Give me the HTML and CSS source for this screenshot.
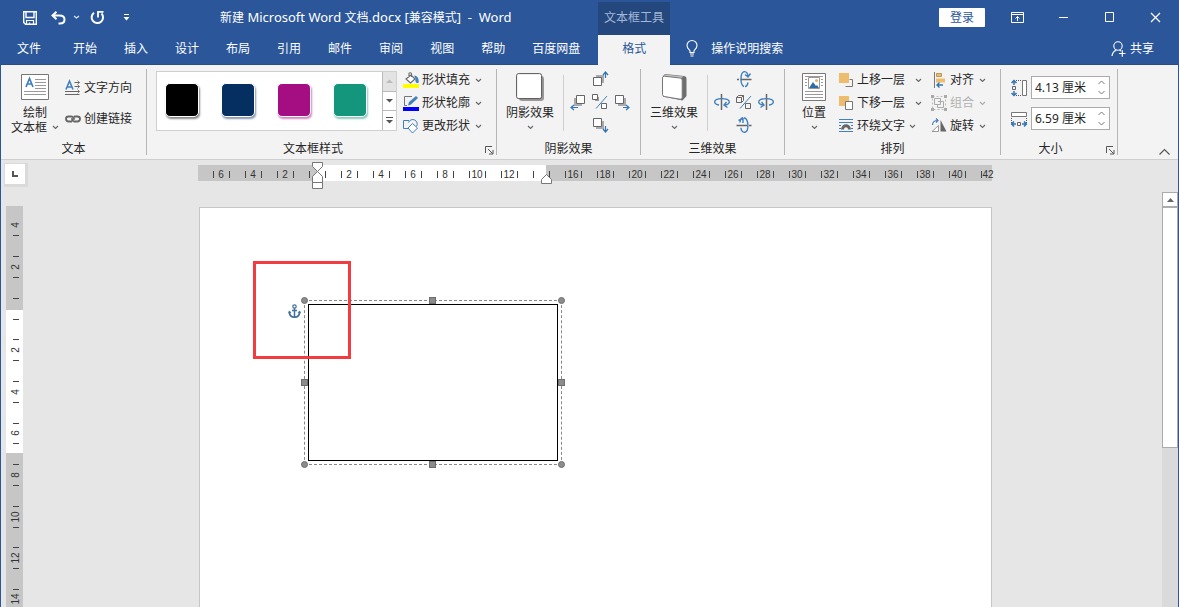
FILE: index.html
```html
<!DOCTYPE html>
<html lang="zh-CN">
<head>
<meta charset="utf-8">
<title>新建 Microsoft Word 文档.docx - Word</title>
<link rel="stylesheet" href="styles.css">
</head>
<body>
<svg class="defs" width="0" height="0" aria-hidden="true">
  <symbol id="chev" viewBox="0 0 7 5"><path d="M1 1l2.500 2.500L6 1" fill="none" stroke="#666" stroke-width="1.100"/></symbol>
  <symbol id="launcher" viewBox="0 0 9 9"><path d="M.5 7V.5H7M3 3l4.500 4.500M8 4v4H4" fill="none" stroke="#555"/></symbol>
</svg>
<div class="window">
  <header class="header">
    <div class="title-row">
      <div class="title-left">
        <div class="quick">
          <button class="qbtn save" aria-label="保存"><svg width="14" height="14" viewBox="0 0 14 14"><path d="M.7.7h12.600v12.600H2.500L.7 11.500zM3 1v5.500h8V1" fill="none" stroke="#fff" stroke-width="1.400"/><path d="M3.500 13.500v-4h7v4M6.500 13.500v-2" fill="none" stroke="#fff" stroke-width="1.200"/></svg></button>
          <button class="qbtn undo" aria-label="撤销"><svg width="15" height="14" viewBox="0 0 15 14"><path d="M5.500.8L1.500 4.500l4 3.700M2 4.500h6.500c3 0 5 1.500 5 4s-2 4-4.500 4H7.500" fill="none" stroke="#fff" stroke-width="2"/></svg></button>
          <button class="qbtn more" aria-label="撤销列表"><svg width="7" height="5" viewBox="0 0 7 5"><path d="M1 1l2.500 2L6 1" fill="none" stroke="#dbe5f5" stroke-width="1.200"/></svg></button>
          <button class="qbtn redo" aria-label="重复"><svg width="15" height="15" viewBox="0 0 15 15"><path d="M4 2.800A5.700 5.700 0 1 0 11.500 3.500" fill="none" stroke="#fff" stroke-width="2"/><path d="M8 7.500V1.800h5.500" fill="none" stroke="#fff" stroke-width="1.800"/></svg></button>
          <button class="qbtn custom" aria-label="自定义快速访问工具栏"><svg width="7" height="7" viewBox="0 0 7 7"><path d="M1 .5h5" stroke="#fff"/><path d="M.5 3h6l-3 3.500z" fill="#fff"/></svg></button>
        </div>
        <h1 class="doc-title">新建<span class="latin"> Microsoft Word </span>文档<span class="latin">.docx [</span>兼容模式<span class="latin">]&nbsp; -&nbsp; Word</span></h1>
      </div>
      <div class="context">文本框工具</div>
      <div class="win-tools">
        <button class="login">登录</button>
        <button class="wbtn" aria-label="功能区显示选项"><svg width="13" height="11" viewBox="0 0 13 11"><path d="M.5.500h12v10H.5zM.5 2.500h12M6.500 9V4.500M4.500 6.500l2-2 2 2" fill="none" stroke="#fff"/></svg></button>
        <button class="wbtn" aria-label="最小化"><svg width="11" height="11" viewBox="0 0 11 11"><path d="M1 5.500h9" stroke="#fff"/></svg></button>
        <button class="wbtn" aria-label="最大化"><svg width="11" height="11" viewBox="0 0 11 11"><path d="M1.500.500h8v9h-8z" fill="none" stroke="#fff"/></svg></button>
        <button class="wbtn" aria-label="关闭"><svg width="11" height="11" viewBox="0 0 11 11"><path d="M1 1l9 9M10 1l-9 9" stroke="#fff" stroke-width="1.200"/></svg></button>
      </div>
    </div>
    <nav class="tabs">
      <button class="tab file">文件</button>
      <button class="tab">开始</button>
      <button class="tab">插入</button>
      <button class="tab">设计</button>
      <button class="tab">布局</button>
      <button class="tab">引用</button>
      <button class="tab">邮件</button>
      <button class="tab">审阅</button>
      <button class="tab">视图</button>
      <button class="tab">帮助</button>
      <button class="tab">百度网盘</button>
      <button class="tab active">格式</button>
      <button class="tell"><svg width="12" height="17" viewBox="0 0 12 17"><path d="M4 12.500V11C3.500 9.500 1 8.500 1 5.500a5 5 0 0 1 10 0C11 8.500 8.500 9.500 8 11v1.500zM4 14h4M4.500 16h3" fill="none" stroke="#fff" stroke-width="1.100"/></svg>操作说明搜索</button>
      <button class="share"><svg width="15" height="16" viewBox="0 0 15 16"><circle cx="7" cy="5" r="4.200" fill="none" stroke="#fff" stroke-width="1.100"/><path d="M1 15c.3-3 2-5 4.500-6M8.500 9l1.500 1M8 12.500h6.500M11.300 9.300v6.400" fill="none" stroke="#fff" stroke-width="1.200"/></svg>共享</button>
    </nav>
  </header>

  <section class="ribbon">
    <div class="group g-text">
      <div class="body">
        <button class="big">
          <svg width="28" height="26" viewBox="0 0 28 26"><path d="M.5.500h27v25H.5z" fill="#fff" stroke="#777"/><path d="M5 13L8.500 4.500 12 13M6 10h5" fill="none" stroke="#4080bd" stroke-width="1.700"/><path d="M14 5.500h11M14 8.500h11M14 11.500h11M14 14.500h11M3 17.500h22M3 20.500h22" stroke="#999"/></svg>
          <span>绘制</span><span>文本框 <svg class="chev" width="7" height="5"><use href="#chev"/></svg></span>
        </button>
        <div class="stack two">
          <button class="row"><svg width="16" height="16" viewBox="0 0 16 16"><path d="M1 9.500L4.500 1 8 9.500M2 7h5" fill="none" stroke="#4080bd" stroke-width="1.600"/><path d="M9.500 2.500h5M9.500 6.500h5M0 11.500h14.500M0 14.500h14.500" stroke="#666"/><path d="M12.500.5l2 2-2 2M12.500 4.500l2 2-2 2M12.500 9.500l2 2-2 2" fill="none" stroke="#666" stroke-width=".8"/></svg>文字方向</button>
          <button class="row"><svg width="16" height="16" viewBox="0 0 16 16"><path d="M7 10.500H3.500a2.500 2.500 0 0 1 0-5h3a2.500 2.500 0 0 1 2.300 3.300M9 5.500h3.500a2.500 2.500 0 0 1 0 5h-3a2.500 2.500 0 0 1-2.300-3.300" fill="none" stroke="#666" stroke-width="1.900"/></svg>创建链接</button>
        </div>
      </div>
      <div class="label"><span>文本</span></div>
    </div>

    <div class="group g-style">
      <div class="body">
        <div class="gallery">
          <div class="swatches">
            <button class="swatch black" aria-label="黑色"></button>
            <button class="swatch navy" aria-label="深蓝"></button>
            <button class="swatch purple" aria-label="紫色"></button>
            <button class="swatch green" aria-label="绿色"></button>
          </div>
          <div class="pager">
            <button class="off" aria-label="上一行"><svg width="7" height="4"><path d="M0 4h7L3.500.500z" fill="#bbb"/></svg></button>
            <button aria-label="下一行"><svg width="7" height="4"><path d="M0 0h7L3.500 3.500z" fill="#555"/></svg></button>
            <button aria-label="其他"><svg width="7" height="7"><path d="M0 .5h7" stroke="#555"/><path d="M0 3h7L3.500 6.500z" fill="#555"/></svg></button>
          </div>
        </div>
        <div class="stack three">
          <button class="row"><svg width="16" height="16" viewBox="0 0 16 16"><path d="M0 12h16v4H0z" fill="#ff0"/><path d="M3 7l5-4 4 4-4.500 4zM6 5V1.500C6 .5 8.500.5 8.500 2v3" fill="#fff" stroke="#666" stroke-width="1.100"/><path d="M11 3.500c3 0 5.500 3 4.500 7.500h-2c-1-1-1.500-3-1-4z" fill="#4080bd"/></svg>形状填充<svg class="chev" width="7" height="5"><use href="#chev"/></svg></button>
          <button class="row"><svg width="16" height="16" viewBox="0 0 16 16"><path d="M0 12h16v4H0z" fill="#00f"/><path d="M9 1.500H1.500v9H4" fill="none" stroke="#777"/><path d="M5 10.500L6 7l7-6 2 2-7 6.500z" fill="#4080bd"/></svg>形状轮廓<svg class="chev" width="7" height="5"><use href="#chev"/></svg></button>
          <button class="row"><svg width="16" height="16" viewBox="0 0 16 16"><path d="M5 10.500H.5v-8H6" fill="none" stroke="#4080bd"/><path d="M5.500 4.500a4.500 4.500 0 1 1 8 4" fill="none" stroke="#4080bd"/><path d="M9.500 5.500l5 4.500-5 5L5 10z" fill="#fff" stroke="#4080bd"/></svg>更改形状<svg class="chev" width="7" height="5"><use href="#chev"/></svg></button>
        </div>
      </div>
      <div class="label launch"><span>文本框样式</span><button class="launcher" aria-label="文本框样式设置"><svg width="9" height="9"><use href="#launcher"/></svg></button></div>
    </div>

    <div class="group g-effect">
      <div class="body">
        <button class="big">
          <svg width="28" height="28" viewBox="0 0 28 28"><rect x="3" y="3" width="25" height="25" rx="3" fill="#999"/><rect x=".6" y=".6" width="25" height="25" rx="2" fill="#fff" stroke="#555"/></svg>
          <span>阴影效果</span><svg class="chev" width="7" height="5"><use href="#chev"/></svg>
        </button>
        <div class="vline"></div>
        <div class="nudge">
          <button class="n" aria-label="上移阴影"><svg width="16" height="16" viewBox="0 0 16 16"><path d="M4 4h8v8H4z" fill="#aaa"/><path d="M1.500 6.500h8v8h-8z" fill="#fff" stroke="#666"/><path d="M13.500 7V2M11 4l2.500-3L16 4" fill="none" stroke="#2f75b5" stroke-width="1.200"/></svg></button>
          <button class="w" aria-label="左移阴影"><svg width="16" height="16" viewBox="0 0 16 16"><path d="M4 4h8v8H4z" fill="#aaa"/><path d="M6.500 1.500h8v8h-8z" fill="#fff" stroke="#666"/><path d="M8 13.500H2M4 11l-3 2.500L4 16" fill="none" stroke="#2f75b5" stroke-width="1.200"/></svg></button>
          <button class="c" aria-label="阴影开关"><svg width="16" height="16" viewBox="0 0 16 16"><path d="M3 3h4v4H3z" fill="#999"/><path d="M.5.500h5v5h-5zM9.500 9.500h5v5h-5z" fill="#fff" stroke="#666"/><path d="M4 14.500L15 2" stroke="#4080bd"/></svg></button>
          <button class="e" aria-label="右移阴影"><svg width="16" height="16" viewBox="0 0 16 16"><path d="M4 4h8v8H4z" fill="#aaa"/><path d="M1.500 1.500h8v8h-8z" fill="#fff" stroke="#666"/><path d="M9 13.500h5M12 11l3 2.500-3 2.500" fill="none" stroke="#2f75b5" stroke-width="1.200"/></svg></button>
          <button class="s" aria-label="下移阴影"><svg width="16" height="16" viewBox="0 0 16 16"><path d="M4 4h8v8H4z" fill="#aaa"/><path d="M1.500 1.500h8v8h-8z" fill="#fff" stroke="#666"/><path d="M13.500 9v5M11 12l2.500 3 2.500-3" fill="none" stroke="#2f75b5" stroke-width="1.200"/></svg></button>
        </div>
      </div>
      <div class="label"><span>阴影效果</span></div>
    </div>

    <div class="group g-effect">
      <div class="body">
        <button class="big">
          <svg width="28" height="28" viewBox="0 0 28 28"><path d="M5 1l19 2q2.500.300 2.500 2.500v17.500l-4 4.500L3 23.500V3z" fill="#6e6e6e"/><path d="M5 1.500l18.500 2-3 2L3.500 3.500z" fill="#c4c4c4"/><path d="M4.500 3.200q-2-.2-2 1.800v16.500q0 1.700 1.700 2l16 2.700q2 .3 2-1.700V7q0-1.700-2-2z" fill="#fff" stroke="#777"/></svg>
          <span>三维效果</span><svg class="chev" width="7" height="5"><use href="#chev"/></svg>
        </button>
        <div class="vline"></div>
        <div class="nudge">
          <button class="n" aria-label="下俯"><svg width="16" height="16" viewBox="0 0 16 16"><path d="M1 8.500h2M4.500 8.500H15.500" stroke="#666" stroke-width="1.500"/><path d="M8 15.500C4 14 4 2 8 .7c2.500-.5 4 2 4 5.300M9 15.500c1.500 0 2.500-1.500 3-4M9 3.500L12 6l2.500-3.500" fill="none" stroke="#4080bd" stroke-width="1.400"/></svg></button>
          <button class="w" aria-label="左偏"><svg width="16" height="16" viewBox="0 0 16 16"><path d="M7.500 0v16" stroke="#666" stroke-width="1.500"/><path d="M5 11C2 10.500.7 9.500.7 8c0-4.500 14.600-4.500 14.600 0 0 1.500-1.500 2.500-4.500 3M12.500 8L10 11l3.500 2.500" fill="none" stroke="#4080bd" stroke-width="1.400"/></svg></button>
          <button class="c" aria-label="三维开关"><svg width="16" height="16" viewBox="0 0 16 16"><path d="M.5 3.500h5v5h-5zM.5 3.500l2-2h5v5l-2 2M5.500 3.500l2-2M9.500 9.500h5v5h-5z" fill="none" stroke="#666"/><path d="M4 14.500L15 2" stroke="#4080bd"/></svg></button>
          <button class="e" aria-label="右偏"><svg width="16" height="16" viewBox="0 0 16 16"><path d="M8.500 0v16" stroke="#666" stroke-width="1.500"/><path d="M11 11c3-.5 4.300-1.500 4.300-3C15.300 3.500.7 3.500.7 8c0 1.500 1.500 2.500 4.500 3M3.500 8L6 11l-3.500 2.500" fill="none" stroke="#4080bd" stroke-width="1.400"/></svg></button>
          <button class="s" aria-label="上翘"><svg width="16" height="16" viewBox="0 0 16 16"><path d="M.5 8.500h11M13 8.500h2.500" stroke="#666" stroke-width="1.500"/><path d="M8 .7c5 1 5 13.500 1 14.500-2.500.5-4-2-4-4.500M4 5.500C4 3 5 1 7 .7M2.500 3.500L7 1.500v4.500" fill="none" stroke="#4080bd" stroke-width="1.400"/></svg></button>
        </div>
      </div>
      <div class="label"><span>三维效果</span></div>
    </div>

    <div class="group g-arrange">
      <div class="body">
        <button class="big">
          <svg width="24" height="28" viewBox="0 0 24 28"><path d="M.5.500h23v27H.5z" fill="#fff" stroke="#777"/><path d="M3 3.500h18M3 6.500h2M19 6.500h2M3 9.500h2M19 9.500h2M3 12.500h2M19 12.500h2M3 18.500h18M3 21.500h18M3 24.500h18" stroke="#999"/><path d="M6.500 4.500h11v11h-11z" fill="#fff" stroke="#999"/><path d="M7 15l4-6 3 4 1-1 2 3z" fill="#2f6ea5"/><circle cx="14.500" cy="7.500" r="1.500" fill="#e8b25c"/></svg>
          <span>位置</span><svg class="chev" width="7" height="5"><use href="#chev"/></svg>
        </button>
        <div class="stack three">
          <button class="row wide"><svg width="16" height="16" viewBox="0 0 16 16"><path d="M6.500 14.500h7v-7h-3" fill="none" stroke="#777"/><path d="M0 1h10v10H0z" fill="#edbd6d"/></svg>上移一层<svg class="chev" width="7" height="5"><use href="#chev"/></svg></button>
          <button class="row wide"><svg width="16" height="16" viewBox="0 0 16 16"><path d="M0 1h10v10H0z" fill="#edbd6d"/><path d="M6.500 6.500h7v8h-7z" fill="#fff" stroke="#777"/></svg>下移一层<svg class="chev" width="7" height="5"><use href="#chev"/></svg></button>
          <button class="row"><svg width="16" height="16" viewBox="0 0 16 16"><path d="M0 1.500h14M0 4.500h14M0 13.500h14M0 10.500h2M12 10.500h2M0 7.500h2M12 7.500h2" stroke="#4080bd"/><path d="M2 11.500C2.500 4.500 11.500 4.500 12 11.500H9c0-3-4-3-4 0z" fill="#666"/></svg>环绕文字<svg class="chev" width="7" height="5"><use href="#chev"/></svg></button>
        </div>
        <div class="stack three second">
          <button class="row"><svg width="16" height="16" viewBox="0 0 16 16"><path d="M3.500 0v16" stroke="#777"/><path d="M5.500 1.500h5v3h-5z" fill="#edbd6d" stroke="#b9975c"/><path d="M5 6.500h9v4H5z" fill="#edbd6d"/><path d="M12 13H6M8.500 10.500L6 13l2.500 2.500" fill="none" stroke="#2f75b5" stroke-width="1.400"/></svg>对齐<svg class="chev" width="7" height="5"><use href="#chev"/></svg></button>
          <button class="row" disabled><svg width="16" height="16" viewBox="0 0 16 16"><path d="M1.500 1.500h13v13h-13z" fill="none" stroke="#bbb" stroke-dasharray="2 2"/><path d="M3.500 3.500h6v6h-6zM7 6.500h5.500v6h-6V10" fill="none" stroke="#aaa"/><path d="M0 0h3v3H0zM13 0h3v3h-3zM0 13h3v3H0zM13 13h3v3h-3z" fill="#aaa"/></svg>组合<svg class="chev" width="7" height="5"><use href="#chev"/></svg></button>
          <button class="row"><svg width="16" height="16" viewBox="0 0 16 16"><path d="M9.500 2v11.500h6z" fill="#666"/><path d="M1 13.500h6.500v-6z" fill="#fff" stroke="#999"/><path d="M1.500 7c0-3 2-4.500 5-4.500M5 .5l2 2-2 2" fill="none" stroke="#4080bd" stroke-width="1.200"/></svg>旋转<svg class="chev" width="7" height="5"><use href="#chev"/></svg></button>
        </div>
      </div>
      <div class="label"><span>排列</span></div>
    </div>

    <div class="group g-size">
      <div class="body">
        <div class="field">
          <label for="h" aria-label="高度"><svg width="16" height="18" viewBox="0 0 16 18"><path d="M11.500 1.500h4v15h-4z" fill="#fff" stroke="#777"/><path d="M5 1.500h6M5 16.500h6" stroke="#555" stroke-dasharray="1 1"/><path d="M1.500 7.500h3v3h-3z" fill="none" stroke="#666"/><path d="M3 1v5M.5 4L3 1.500 5.500 4M3 12v5M.5 14L3 16.500 5.500 14" fill="none" stroke="#2f75b5" stroke-width="1.500"/></svg></label>
          <div class="spin"><input id="h" type="text" value="4.13 厘米"><div class="arrows"><button aria-label="增加高度"><svg width="7" height="5"><path d="M.5 4l3-3 3 3" fill="none" stroke="#777"/></svg></button><button aria-label="减少高度"><svg width="7" height="5"><path d="M.5 1l3 3 3-3" fill="none" stroke="#777"/></svg></button></div></div>
        </div>
        <div class="field">
          <label for="w" aria-label="宽度"><svg width="16" height="18" viewBox="0 0 16 18"><path d="M.5 2.500h15v4H.5z" fill="#fff" stroke="#777"/><path d="M.5 8v5M15.500 8v5" stroke="#555" stroke-dasharray="1 1"/><path d="M6.500 12.500h3v3h-3z" fill="none" stroke="#666"/><path d="M0 14h5M3 11.500L.7 14 3 16.500M11 14h5M13 11.500l2.300 2.500-2.300 2.500" fill="none" stroke="#2f75b5" stroke-width="1.500"/></svg></label>
          <div class="spin"><input id="w" type="text" value="6.59 厘米"><div class="arrows"><button aria-label="增加宽度"><svg width="7" height="5"><path d="M.5 4l3-3 3 3" fill="none" stroke="#777"/></svg></button><button aria-label="减少宽度"><svg width="7" height="5"><path d="M.5 1l3 3 3-3" fill="none" stroke="#777"/></svg></button></div></div>
        </div>
      </div>
      <div class="label launch"><span>大小</span><button class="launcher" aria-label="大小设置"><svg width="9" height="9"><use href="#launcher"/></svg></button></div>
    </div>
    <button class="collapse" aria-label="折叠功能区"><svg width="11" height="6" viewBox="0 0 11 6"><path d="M.5 5.500l5-5 5 5" fill="none" stroke="#555" stroke-width="1.200"/></svg></button>
  </section>

  <main class="work">
    <div class="corner"><button class="tabstop" aria-label="制表符"><svg width="6" height="6" viewBox="0 0 6 6"><path d="M1 0v5h5" fill="none" stroke="#555" stroke-width="2"/></svg></button></div>
    <div class="hruler">
      <svg width="793" height="32" viewBox="0 0 793 32">
        <path d="M-1 5h794v16H-1z" fill="#c6c6c6"/><path d="M118 5h229v16H118z" fill="#fff"/>
        <path d="M14 14.500H784" stroke="#444" stroke-width="7" stroke-dasharray="1 15"/>
        <g class="nums">
          <text x="22" y="18">6</text><text x="54" y="18">4</text><text x="86" y="18">2</text><text x="150" y="18">2</text><text x="182" y="18">4</text><text x="214" y="18">6</text><text x="246" y="18">8</text><text x="278" y="18">10</text><text x="310" y="18">12</text><text x="374" y="18">16</text><text x="406" y="18">18</text><text x="438" y="18">20</text><text x="470" y="18">22</text><text x="502" y="18">24</text><text x="534" y="18">26</text><text x="566" y="18">28</text><text x="598" y="18">30</text><text x="630" y="18">32</text><text x="662" y="18">34</text><text x="694" y="18">36</text><text x="726" y="18">38</text><text x="758" y="18">40</text><text x="789" y="18">42</text>
        </g>
        <path d="M113.500 2.500h10v4l-5 5-5-5zM118.500 11.500l5 5v6h-10v-6zM113.500 22.500h10v6h-10zM347.500 14.500l5 5v4h-10v-4z" fill="#fff" stroke="#777"/>
      </svg>
    </div>
    <div class="vruler">
      <svg width="17" height="401" viewBox="0 0 17 401">
        <path d="M0 0h17v401H0z" fill="#c6c6c6"/><path d="M0 104h17v143H0z" fill="#fff"/>
        <path d="M7 29.500h6M7 50.500h6M7 71.500h6M7 92.500h6M7 113.500h6M7 133.500h6M7 154.500h6M7 175.500h6M7 196.500h6M7 217.500h6M7 237.500h6M7 258.500h6M7 279.500h6M7 300.500h6M7 321.500h6M7 341.500h6M7 362.500h6M7 383.500h6" stroke="#444"/>
        <g class="nums">
          <text transform="translate(13 19) rotate(-90)">4</text><text transform="translate(13 61) rotate(-90)">2</text><text transform="translate(13 144) rotate(-90)">2</text><text transform="translate(13 186) rotate(-90)">4</text><text transform="translate(13 227) rotate(-90)">6</text><text transform="translate(13 269) rotate(-90)">8</text><text transform="translate(13 311) rotate(-90)">10</text><text transform="translate(13 352) rotate(-90)">12</text><text transform="translate(13 393) rotate(-90)">14</text>
        </g>
      </svg>
    </div>
    <div class="canvas">
      <div class="page">
        <div class="shape">
          <div class="textbox"></div>
          <i class="hd round nw"></i><i class="hd nn"></i><i class="hd round ne"></i>
          <i class="hd ww"></i><i class="hd ee"></i>
          <i class="hd round sw"></i><i class="hd ss"></i><i class="hd round se"></i>
        </div>
        <svg class="anchor" width="13" height="15" viewBox="0 0 13 15"><circle cx="6.500" cy="2.500" r="1.700" fill="none" stroke="#41719c" stroke-width="1.200"/><path d="M6.500 4v9M4 6.500h5" stroke="#41719c" stroke-width="1.500"/><path d="M1.500 8c0 3.500 2 5.200 5 5.200s5-1.700 5-5.200" fill="none" stroke="#41719c" stroke-width="1.700"/><path d="M0 9.500L1 6.500l2.500 2zM13 9.500l-1-3-2.500 2z" fill="#41719c"/></svg>
        <div class="mark"></div>
      </div>
    </div>
    <div class="scroll">
      <button class="up" aria-label="向上滚动"><svg width="7" height="4"><path d="M0 4h7L3.500 0z" fill="#666"/></svg></button>
      <div class="thumb"></div>
    </div>
  </main>
</div>
</body>
</html>
```

FILE: styles.css
```css
* { box-sizing: border-box; }
body {
  margin: 0;
  font: 12px/16px "Noto Sans", "Noto Sans CJK SC", sans-serif;
  color: #262626;
}
button {
  font: inherit;
  color: inherit;
  background: none;
  border: 0;
  padding: 0;
  white-space: nowrap;
}
svg { display: block; flex: none; overflow: visible; }
.defs { position: absolute; }
.window {
  min-height: 100vh;
  display: flex;
  flex-direction: column;
  border: solid #2b579a;
  border-width: 0 1px;
  background: #e6e6e6;
}

/* title bar and tabs */
.header { background: #2b579a; color: #fff; }
.title-row { display: flex; height: 35px; align-items: center; }
.title-left { display: flex; align-items: center; width: 597px; flex: none; }
.quick { display: flex; align-items: center; width: 219px; padding-left: 22px; }
.qbtn.undo { margin-left: 14px; }
.qbtn.more { margin-left: 7px; }
.qbtn.redo { margin-left: 10px; }
.qbtn.custom { margin-left: 18px; }
.doc-title { margin: 0; font-size: 12px; font-weight: 400; white-space: nowrap; }
.latin { font-size: 13px; }
.context {
  width: 72px;
  height: 33px;
  align-self: flex-end;
  background: #24477d;
  color: #a3b7d6;
  line-height: 31px;
  text-align: center;
}
.win-tools { display: flex; align-items: center; margin-left: auto; }
.login { width: 46px; height: 19px; background: #fff; color: #2b579a; border-radius: 1px; margin-right: 9px; line-height: 18px; }
.wbtn { width: 46px; height: 32px; display: flex; align-items: center; justify-content: center; }
.tabs { display: flex; height: 30px; border-bottom: 1px solid #2a4b8c; }
.tab { padding: 0 13px 2px; margin-right: 1px; }
.tab.file { padding: 0 16px 2px; margin-right: 3px; }
.tab.active { width: 72px; height: 30px; margin: 0 0 0 4px; background: #f3f3f3; color: #2b579a; }
.tell { display: flex; align-items: center; gap: 13px; padding: 0 0 2px 16px; }
.share { display: flex; align-items: center; gap: 4px; margin-left: auto; padding: 0 24px 2px 0; }

/* ribbon */
.ribbon { display: flex; background: #f3f3f3; padding: 4px 0; border-bottom: 1px solid #cfcfcf; }
.group { display: flex; flex-direction: column; border-right: 1px solid #b5b5b5; flex: none; }
.body { display: flex; height: 72px; }
.label { display: flex; height: 14px; line-height: 16px; }
.label span { flex: 1; text-align: center; }
.launch span { padding-left: 0; padding-right: 6px; }
.launcher { width: 11px; display: flex; align-items: flex-end; }
.g-text { width: 146px; }
.g-style { width: 350px; }
.g-effect { width: 144px; }
.g-arrange { width: 216px; }
.g-size { width: 117px; }

.big { display: flex; flex-direction: column; align-items: center; padding-top: 4px; flex: none; }
.big > svg:first-child { margin-bottom: 4px; }
.big > span { display: flex; align-items: center; gap: 5px; height: 16px; }
.big > .chev { margin-top: 4px; }
.g-text .big { width: 48px; margin-left: 10px; padding-top: 5px; }
.g-text .big > svg:first-child { margin-bottom: 5px; }
.g-text .big > span { height: 15px; }
.g-effect .big { width: 66px; }
.g-arrange .big { width: 58px; }
.vline { width: 1px; margin: 6px 0 10px; background: #d0d0d0; }

.row { display: flex; align-items: center; gap: 3px; }
.row .chev { margin-left: 2px; }
.row.wide .chev { margin-left: 8px; }
.row:disabled { color: #b1b1b1; }
.row:disabled .chev { opacity: .5; }
.stack { display: flex; flex-direction: column; }
.two { gap: 15px; padding: 11px 0 0 6px; }
.three { gap: 7px; padding: 3px 0 0 6px; }
.g-arrange .three { padding-left: 0; margin-left: -4px; }
.g-arrange .three .row { gap: 2px; }
.g-arrange .second { margin-left: 9px; }
.g-arrange .second .row { gap: 3px; }

.gallery { display: flex; width: 241px; height: 60px; margin: 2px 0 0 9px; border: 1px solid #cfcfcf; background: #fff; }
.swatches { display: flex; flex: 1; gap: 22px; padding: 11px 0 0 8px; }
.swatch { width: 34px; height: 34px; flex: none; border: 1px solid #fff; border-radius: 5px; }
.black { background: #000; box-shadow: 1px 2px 2px #888; }
.navy { background: #052f61; box-shadow: 1px 2px 2px #8797b0; }
.purple { background: #a50e82; box-shadow: 1px 2px 2px #d287c1; }
.green { background: #14967c; box-shadow: 1px 2px 2px #8acbbe; }
.pager { display: flex; flex-direction: column; width: 14px; border-left: 1px solid #bbb; }
.pager button { flex: 1; display: flex; align-items: center; justify-content: center; }
.pager button + button { border-top: 1px solid #bbb; }
.pager .off { background: #e3e3e3; }

.nudge {
  display: grid;
  grid-template: repeat(3, 16px) / repeat(3, 16px);
  grid-template-areas: ". n ." "w c e" ". s .";
  gap: 7px 6px;
  padding: 2px 0 0 6px;
}
.n { grid-area: n; }
.w { grid-area: w; }
.c { grid-area: c; }
.e { grid-area: e; }
.s { grid-area: s; }

.g-size .body { flex-direction: column; gap: 8px; padding: 7px 0 0 10px; }
.field { display: flex; align-items: center; gap: 4px; }
.spin { display: flex; width: 79px; height: 23px; border: 1px solid #ababab; background: #fff; }
.spin input { flex: 1; min-width: 0; border: 0; padding: 0 0 0 3px; font: inherit; color: inherit; background: none; outline: 0; }
.arrows { display: flex; flex-direction: column; width: 16px; }
.arrows button { flex: 1; display: flex; align-items: center; justify-content: center; }
.collapse { margin: auto 8px 0 auto; }

/* document area */
.work {
  flex: 1;
  display: grid;
  grid-template: 32px 1fr / 28px 1fr 16px;
}
.corner { padding: 3px 0 0 3px; }
.tabstop { display: flex; align-items: center; justify-content: center; width: 22px; height: 22px; background: #fff; border: 1px solid #dadada; box-shadow: 1px 1px 0 1px #dadada; }
.hruler { display: flex; justify-content: center; grid-area: 1 / 2; }
.nums { font: 10px "Liberation Sans", sans-serif; fill: #333; text-anchor: middle; }
.vruler { grid-area: 2 / 1; padding: 14px 0 0 5px; }
.canvas { grid-area: 2 / 2; display: flex; justify-content: center; padding-top: 15px; }
.page { position: relative; width: 793px; background: #fff; border: solid #c6c6c6; border-width: 1px 1px 0; }
.shape { position: absolute; left: 104px; top: 92px; width: 258px; height: 165px; border: 1px dashed #888; padding: 3px; }
.textbox { height: 100%; border: 1px solid #000; }
.hd { position: absolute; width: 7px; height: 7px; background: #8c8c8c; border: 1px solid #6e6e6e; margin: -4px; }
.round { border-radius: 50%; }
.nw, .ww, .sw { left: 0; }
.nn, .ss { left: 50%; }
.ne, .ee, .se { left: 100%; margin-left: -3px; }
.nw, .nn, .ne { top: 0; }
.ww, .ee { top: 50%; }
.sw, .ss, .se { top: 100%; margin-top: -3px; }
.anchor { position: absolute; left: 88px; top: 96px; }
.mark { position: absolute; left: 53px; top: 53px; width: 98px; height: 98px; border: 3px solid #f23c3f; }
.scroll { grid-area: 2 / 3; display: flex; flex-direction: column; background: #dadada; }
.up { height: 15px; display: flex; align-items: center; justify-content: center; background: #fff; border: 1px solid #ababab; }
.thumb { height: 241px; background: #fff; border: 1px solid #ababab; }
```
